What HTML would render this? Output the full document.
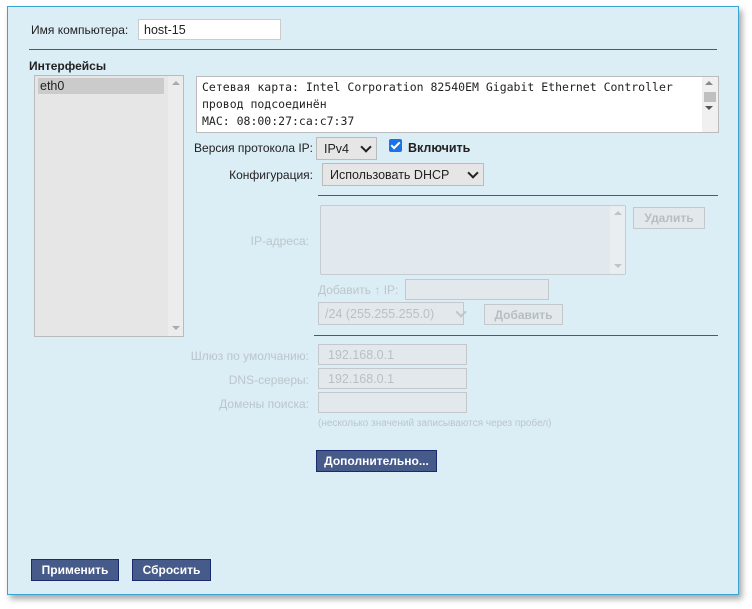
<!DOCTYPE html>
<html><head><meta charset="utf-8"><style>
body{margin:0;width:752px;height:609px;background:#fff;font-family:"Liberation Sans",sans-serif;font-size:12px;color:#222;position:relative;overflow:hidden}
.a{position:absolute}
#p{left:7px;top:6px;width:730px;height:587px;background:#dbedf5;border:1px solid #3aa3d3;box-shadow:3px 4px 6px rgba(0,0,0,.35)}
.hr{position:absolute;height:1px;background:#40606f}
.in{position:absolute;background:#fff;border:1px solid #bbb;box-sizing:border-box;padding:3px 5px;font-size:12.5px}
.dis{background:#e3e8ec;border-color:#c4c8cc;color:#b8c0c6}
.lbl{position:absolute;text-align:right;white-space:nowrap}
.dl{color:#bcc6cc}
.sel{position:absolute;background:#e6e6e6;border:1px solid #bbb;box-sizing:border-box;padding:4px 7px;font-size:12.5px}
.btn{position:absolute;background:#465b89;border:1px solid #1b2a6e;box-sizing:border-box;color:#fff;font-weight:bold;font-size:12px;text-align:center;line-height:20px}
.dbtn{position:absolute;background:#e2e8ec;border:1px solid #c3c8cc;box-sizing:border-box;color:#b6bec4;font-weight:bold;font-size:12px;text-align:center;line-height:20px}
.chev{position:absolute;width:6px;height:6px;border-right:2px solid #222;border-bottom:2px solid #222;transform:rotate(45deg)}
.mono{font-family:"DejaVu Sans Mono","Liberation Mono",monospace;font-size:11.5px;line-height:17px}
</style></head><body>
<div class="a" id="p"></div>
<div class="a" style="left:31px;top:23px">Имя компьютера:</div>
<div class="in" style="left:138px;top:19px;width:143px;height:21px;padding:3px 5px;border-color:#ccc">host-15</div>
<div class="hr" style="left:29px;top:49px;width:688px"></div>
<div class="a" style="left:29px;top:59px;font-weight:bold">Интерфейсы</div>
<div class="a" style="left:34px;top:75px;width:150px;height:262px;background:#e6e6e6;border:1px solid #bbb;box-sizing:border-box"></div>
<div class="a" style="left:38px;top:78px;width:126px;height:16px;background:#cbcbcb;padding-left:2px;box-sizing:border-box;line-height:16px;font-size:12.5px">eth0</div>
<div class="a" style="left:168px;top:76px;width:15px;height:260px;background:#ececec"></div>
<div class="a" style="left:172px;top:81px;border:4px solid transparent;border-bottom:4px solid #aaa;border-top:none"></div>
<div class="a" style="left:172px;top:326px;border:4px solid transparent;border-top:4px solid #aaa;border-bottom:none"></div>
<div class="a" style="left:196px;top:76px;width:523px;height:57px;background:#fff;border:1px solid #bbb;box-sizing:border-box"></div>
<div class="a mono" style="left:202px;top:79px">Сетевая карта: Intel Corporation 82540EM Gigabit Ethernet Controller<br>провод подсоединён<br>MAC: 08:00:27:ca:c7:37</div>
<div class="a" style="left:702px;top:77px;width:16px;height:55px;background:#f0f0f0"></div>
<div class="a" style="left:705px;top:81px;border:4px solid transparent;border-bottom:4px solid #888;border-top:none"></div>
<div class="a" style="left:704px;top:92px;width:12px;height:10px;background:#c0c0c0"></div>
<div class="a" style="left:705px;top:106px;border:4px solid transparent;border-top:4px solid #555;border-bottom:none"></div>
<div class="lbl" style="right:439px;top:141px">Версия протокола IP:</div>
<div class="sel" style="left:316px;top:137px;width:61px;height:23px">IPv4</div>
<div class="chev" style="left:362px;top:143px"></div>
<div class="a" style="left:389px;top:139px;width:13px;height:13px;background:#1a73e8;border-radius:2px"></div>
<div class="a" style="left:393px;top:140px;width:3px;height:7px;border-right:2px solid #fff;border-bottom:2px solid #fff;transform:rotate(45deg)"></div>
<div class="a" style="left:408px;top:141px;font-weight:bold;font-size:12.5px">Включить</div>
<div class="lbl" style="right:439px;top:168px">Конфигурация:</div>
<div class="sel" style="left:322px;top:163px;width:162px;height:23px">Использовать DHCP</div>
<div class="chev" style="left:469px;top:169px"></div>
<div class="hr" style="left:318px;top:195px;width:400px"></div>
<div class="a" style="left:320px;top:205px;width:306px;height:70px;background:#e1e8ee;border:1px solid #c6cbcf;box-sizing:border-box;border-radius:2px"></div>
<div class="a" style="left:610px;top:206px;width:15px;height:68px;background:#e9eef1"></div>
<div class="a" style="left:614px;top:211px;border:4px solid transparent;border-bottom:4px solid #c0c4c8;border-top:none"></div>
<div class="a" style="left:614px;top:264px;border:4px solid transparent;border-top:4px solid #c0c4c8;border-bottom:none"></div>
<div class="lbl dl" style="right:443px;top:234px">IP-адреса:</div>
<div class="dbtn" style="left:633px;top:207px;width:72px;height:22px">Удалить</div>
<div class="a dl" style="left:318px;top:283px">Добавить ↑ IP:</div>
<div class="in dis" style="left:405px;top:279px;width:144px;height:21px"></div>
<div class="in dis" style="left:318px;top:302px;width:146px;height:23px;padding:4px 6px">/24 (255.255.255.0)</div>
<div class="chev" style="left:457px;top:308px;border-color:#c0c6ca"></div>
<div class="dbtn" style="left:484px;top:304px;width:79px;height:21px">Добавить</div>
<div class="hr" style="left:314px;top:335px;width:404px"></div>
<div class="lbl dl" style="right:443px;top:349px">Шлюз по умолчанию:</div>
<div class="in dis" style="left:318px;top:344px;width:149px;height:21px;padding:3px 9px">192.168.0.1</div>
<div class="lbl dl" style="right:443px;top:373px">DNS-серверы:</div>
<div class="in dis" style="left:318px;top:368px;width:149px;height:21px;padding:3px 9px">192.168.0.1</div>
<div class="lbl dl" style="right:443px;top:397px">Домены поиска:</div>
<div class="in dis" style="left:318px;top:392px;width:149px;height:21px"></div>
<div class="a dl" style="left:318px;top:418px;font-size:10px">(несколько значений записываются через пробел)</div>
<div class="btn" style="left:316px;top:450px;width:121px;height:22px">Дополнительно...</div>
<div class="btn" style="left:31px;top:559px;width:88px;height:22px">Применить</div>
<div class="btn" style="left:132px;top:559px;width:79px;height:22px">Сбросить</div>
</body></html>
